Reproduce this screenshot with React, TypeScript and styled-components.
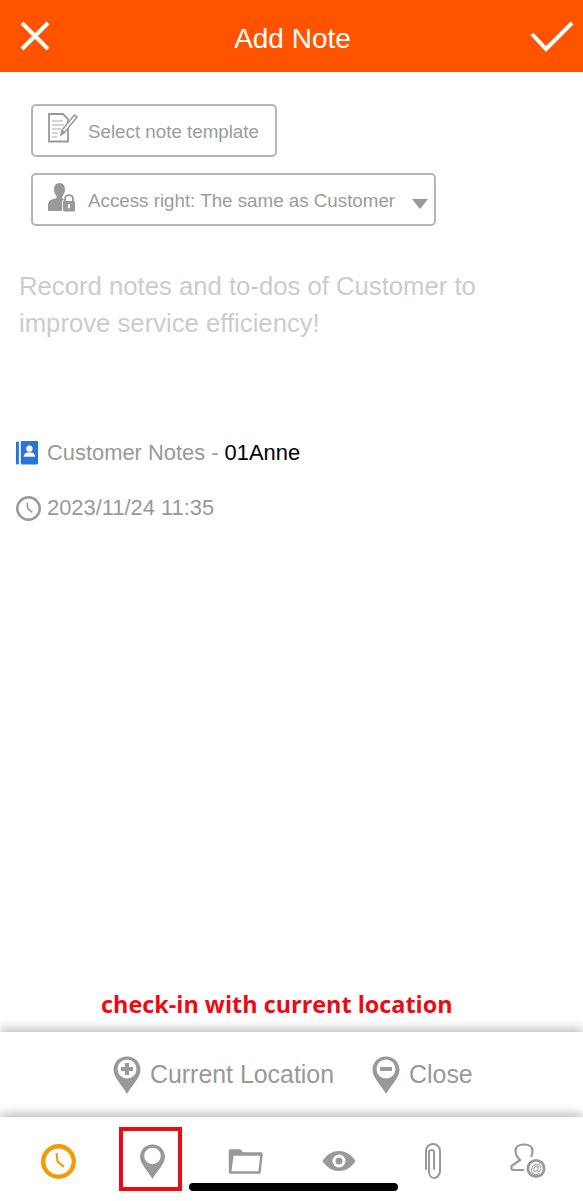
import React from "react";
import styled, { createGlobalStyle } from "styled-components";

const GlobalStyle = createGlobalStyle`
  html, body {
    margin: 0;
    padding: 0;
    background: #fff;
  }
  body {
    font-family: "Liberation Sans", Arial, sans-serif;
  }
`;

function ClockIcon({ size, color, width }: { size: number; color: string; width: number }) {
  return (
    <svg width={size} height={size} viewBox="0 0 36 36" fill="none">
      <circle cx="18" cy="18" r={18 - width / 2} stroke={color} strokeWidth={width} />
      <path d="M16 9.500 L17 18 L23.500 23.500" stroke={color} strokeWidth="2.200" />
    </svg>
  );
}

function PinIcon({ width, height, children }: { width: number; height: number; children?: React.ReactNode }) {
  return (
    <svg width={width} height={height} viewBox="0 0 28 38">
      <path
        d="M14 0.500C6.300 0.500 0.500 6.300 0.500 14c0 7.500 8.500 15 13.500 24c5-9 13.500-16.500 13.500-24C27.500 6.300 21.700 0.500 14 0.500Z"
        fill="#999"
      />
      {children}
    </svg>
  );
}

function NoteIcon() {
  return (
    <svg width="30" height="30" viewBox="0 0 30 30" fill="none" stroke="#999">
      <path d="M1 1h14l5 5v22.500H1z" strokeWidth="1.800" />
      <path d="M4 8h11M4 12h12M4 16h9M4 20h6M4 24h5" strokeWidth="1.100" stroke="#aaa" />
      <path d="M26.500 2l2.500 2-12 15-4 3 1-5z" fill="#fff" strokeWidth="1.500" />
      <path d="M13 22l1-5 3 2z" fill="#999" strokeWidth="0.500" />
    </svg>
  );
}

function LockUserIcon() {
  return (
    <svg width="30" height="30" viewBox="0 0 30 30" fill="#999">
      <path d="M11.500 1c3.500 0 5.500 2.800 5.500 6.500c0 3-1.200 5-2.500 6.500v2.500l1.500 1c-1.500 0.800-2 2-2 3.500V29H0v-6c0-3 1.500-4.500 4-5.500l4.500-1.500V14C7.200 12.500 6 10.500 6 7.500C6 3.800 8 1 11.500 1Z" />
      <path d="M17 20v-3c0-5.300 8-5.300 8 0v3" fill="none" stroke="#999" strokeWidth="1.800" />
      <rect x="15" y="19" width="12" height="10.500" rx="1" />
      <rect x="20" y="22" width="2" height="4.500" rx="1" fill="#fff" />
    </svg>
  );
}

function ContactBookIcon() {
  return (
    <svg width="23" height="26" viewBox="0 0 24 26">
      <rect x="0" y="1" width="3" height="24" rx="1" fill="#2a73d9" />
      <rect x="5" y="0.500" width="18" height="24.500" rx="1" fill="#2a73d9" />
      <circle cx="14" cy="8.500" r="3.300" fill="#fff" />
      <path d="M8 17c0-3 2.500-4.500 4-4.500h4c1.500 0 4 1.500 4 4.500z" fill="#fff" />
    </svg>
  );
}

function FolderIcon() {
  return (
    <svg width="36" height="26" viewBox="0 0 36 26" fill="none" stroke="#999" strokeWidth="2.400" strokeLinejoin="round">
      <path d="M2 8V2.500h10l2.500 3H33v2" fill="#999" />
      <path d="M33.500 6.500L31.500 24.500H2L4.500 6.500z" fill="#fff" />
      <path d="M2 24V6" />
    </svg>
  );
}

function EyeIcon() {
  return (
    <svg width="34" height="22" viewBox="0 0 34 22">
      <path d="M0.500 11C5 4 11 1 17 1s12 3 16.500 10C29 18 23 21 17 21S5 18 0.500 11Z" fill="#999" />
      <circle cx="17" cy="11" r="6.500" fill="#fff" />
      <circle cx="17" cy="11" r="3.500" fill="#999" />
    </svg>
  );
}

function ClipIcon() {
  return (
    <svg width="18" height="36" viewBox="0 0 18 36" fill="none" stroke="#999" strokeWidth="2">
      <path
        d="M2 26V8c0-4 3-7 7-7s7 3 7 7v20c0 4-3 7-6 7s-5-3-5-7V9c0-1 1-2 2.500-2S10 8 10 9v17"
        strokeLinecap="round"
      />
    </svg>
  );
}

function UserAtIcon() {
  return (
    <svg width="36" height="36" viewBox="0 0 36 36">
      <path
        d="M1.500 27H14M1.500 27V23L10 17C7 14 5.500 11 5.500 8C5.500 4 9 1.500 14 1.500C19 1.500 22.500 4 22.500 8C22.500 10.500 22 12 21 14"
        fill="none"
        stroke="#999"
        strokeWidth="2.200"
      />
      <circle cx="26" cy="25.500" r="9.500" fill="#999" />
      <circle cx="26" cy="25.500" r="6.800" fill="#fff" />
      <text x="26" y="29.500" fontSize="12" fontWeight="700" fill="#999" textAnchor="middle" fontFamily="Liberation Sans">@</text>
    </svg>
  );
}

export default function App() {
  return (
    <>
      <GlobalStyle />
      <Page>
        <Header>
          <HeaderIcon>
            <svg width="32" height="30" viewBox="0 0 32 30" fill="none" stroke="#fff" strokeWidth="4">
              <path d="M3 2l26 26M29 2L3 28" />
            </svg>
          </HeaderIcon>
          <Title>Add Note</Title>
          <HeaderIcon>
            <svg width="44" height="32" viewBox="0 0 44 32" fill="none" stroke="#fff" strokeWidth="4">
              <path d="M2 14l14 15L42 3" />
            </svg>
          </HeaderIcon>
        </Header>

        <Main>
          <Controls>
            <OutlineButton>
              <NoteIcon />
              <ButtonLabel>Select note template</ButtonLabel>
            </OutlineButton>
            <OutlineButton>
              <LockUserIcon />
              <ButtonLabel>Access right: The same as Customer</ButtonLabel>
              <Caret />
            </OutlineButton>
          </Controls>

          <Placeholder>
            Record notes and to-dos of Customer to
            <br />
            improve service efficiency!
          </Placeholder>

          <MetaRow>
            <ContactBookIcon />
            <MetaText>
              Customer Notes - <strong>01Anne</strong>
            </MetaText>
          </MetaRow>
          <DateRow>
            <ClockIcon size={25} color="#999" width={3.6} />
            <MetaText>2023/11/24 11:35</MetaText>
          </DateRow>
        </Main>

        <Caption>check-in with current location</Caption>

        <LocationPanel>
          <LocationAction>
            <PinIcon width={28} height={38}>
              <circle cx="14" cy="13" r="9.500" fill="#fff" />
              <path d="M14 7v12M8 13h12" stroke="#999" strokeWidth="4" />
            </PinIcon>
            Current Location
          </LocationAction>
          <LocationAction>
            <PinIcon width={28} height={38}>
              <circle cx="14" cy="13" r="9.500" fill="#fff" />
              <path d="M8 13h12" stroke="#999" strokeWidth="4" />
            </PinIcon>
            Close
          </LocationAction>
        </LocationPanel>

        <TabBar>
          <Tab>
            <ClockIcon size={35} color="#f59a00" width={4.500} />
          </Tab>
          <Tab $highlighted>
            <PinIcon width={27} height={35}>
              <circle cx="14" cy="13" r="9" fill="#fff" />
            </PinIcon>
          </Tab>
          <Tab>
            <FolderIcon />
          </Tab>
          <Tab>
            <EyeIcon />
          </Tab>
          <Tab>
            <ClipIcon />
          </Tab>
          <Tab $nudge={2}>
            <UserAtIcon />
          </Tab>
          <HomeIndicator />
        </TabBar>
      </Page>
    </>
  );
}

const Page = styled.div`
  display: flex;
  flex-direction: column;
  width: 583px;
  height: 1201px;
  overflow: hidden;
  background: #fff;
`;

const Header = styled.header`
  display: flex;
  flex: none;
  align-items: center;
  justify-content: space-between;
  height: 72px;
  padding: 0 0 0 19px;
  background: #ff5300;
`;

const HeaderIcon = styled.div`
  display: flex;
  width: 52px;
  &:last-child {
    justify-content: flex-end;
    padding-right: 9px;
  }
`;

const Title = styled.h1`
  margin: 5px 0 0 -8px;
  color: #fff;
  font-size: 28px;
  font-weight: 400;
`;

const Main = styled.main`
  flex: 1;
  padding: 32px 16px 0;
`;

const Controls = styled.div`
  display: flex;
  flex-direction: column;
  align-items: flex-start;
  gap: 16px;
  padding-left: 15px;
`;

const OutlineButton = styled.div`
  display: flex;
  align-items: center;
  box-sizing: border-box;
  height: 53px;
  padding: 0 16px 0 15px;
  border: 2px solid #b5b5b5;
  border-radius: 5px;
  color: #9c9c9c;
  svg {
    flex: none;
    margin: 0 10px 6px 0;
  }
`;

const ButtonLabel = styled.span`
  margin-top: 3px;
  font-size: 18.750px;
  white-space: nowrap;
`;

const Caret = styled.span`
  width: 0;
  height: 0;
  margin: 8px -10px 0 17px;
  border-top: 10px solid #999;
  border-left: 8px solid transparent;
  border-right: 8px solid transparent;
`;

const Placeholder = styled.p`
  margin: 42px 0 0 3px;
  color: #ccc;
  font-size: 25.700px;
  line-height: 37px;
`;

const MetaRow = styled.div`
  display: flex;
  align-items: center;
  gap: 8px;
  margin-top: 98px;
  color: #999;
`;

const DateRow = styled(MetaRow)`
  margin-top: 29px;
  gap: 6px;
`;

const MetaText = styled.span`
  font-size: 21.900px;
  strong {
    color: #000;
    font-weight: 400;
  }
`;

const Caption = styled.div`
  flex: none;
  height: 27px;
  padding: 0 0 14px 101px;
  color: #ee0a14;
  font-family: "Open Sans", sans-serif;
  font-size: 23.400px;
  font-weight: 700;
  line-height: 27px;
`;

const LocationPanel = styled.section`
  display: flex;
  flex: none;
  align-items: center;
  gap: 38px;
  height: 85px;
  padding-left: 113px;
  box-sizing: border-box;
  background: #fff;
  box-shadow: 0 -3px 10px rgba(0, 0, 0, 0.28);
`;

const LocationAction = styled.div`
  display: flex;
  align-items: center;
  gap: 9px;
  color: #999;
  font-size: 24.900px;
`;

const TabBar = styled.nav`
  position: relative;
  display: grid;
  flex: none;
  grid-template-columns: repeat(6, 1fr);
  box-sizing: border-box;
  height: 84px;
  padding: 4px 10px 0 12px;
  background: #fff;
  box-shadow: 0 -3px 10px rgba(0, 0, 0, 0.28);
`;

const Tab = styled.div<{ $highlighted?: boolean; $nudge?: number }>`
  display: flex;
  position: relative;
  align-items: center;
  justify-content: center;
  padding-left: ${(props) => (props.$nudge ? props.$nudge * 2 : 0)}px;
  &::after {
    content: "";
    display: ${(props) => (props.$highlighted ? "block" : "none")};
    position: absolute;
    top: 6px;
    left: 13px;
    width: 63px;
    height: 64px;
    box-sizing: border-box;
    border: 4px solid #ee0a14;
  }
`;

const HomeIndicator = styled.div`
  position: absolute;
  left: 189px;
  bottom: 10px;
  width: 209px;
  height: 8px;
  border-radius: 4px;
  background: #000;
`;
